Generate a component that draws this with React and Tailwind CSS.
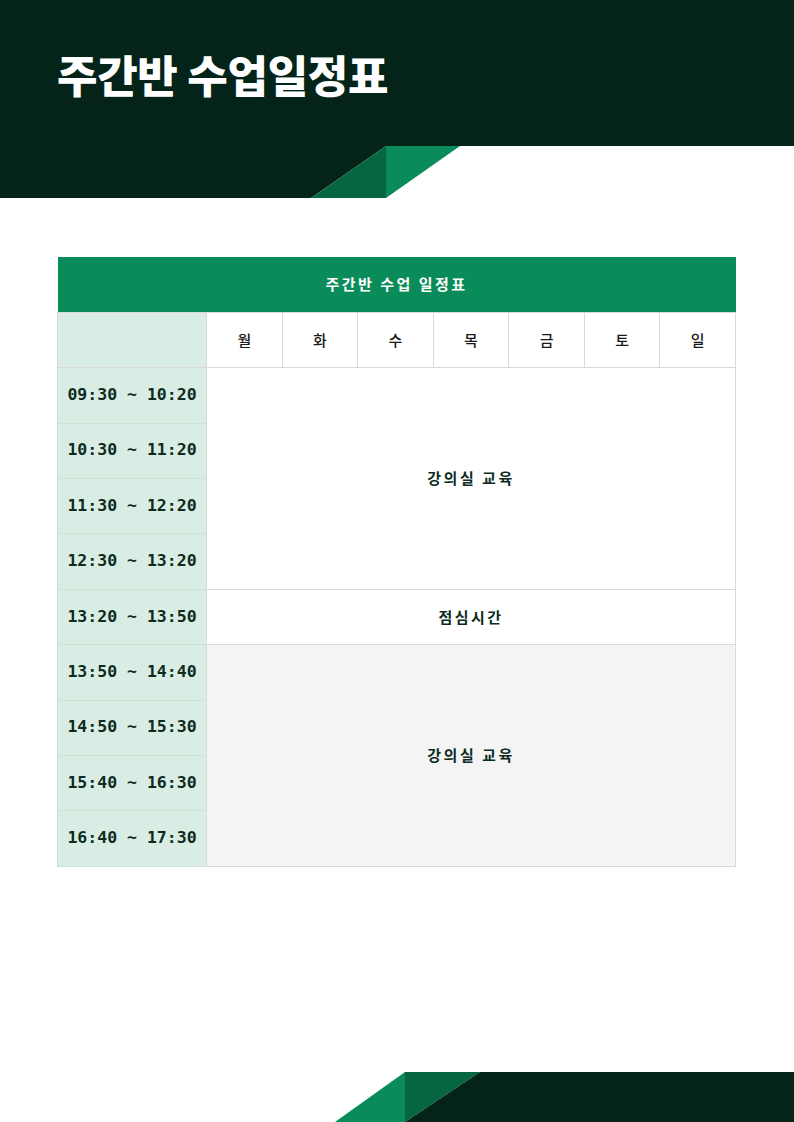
import React from 'react';

const days = ['월', '화', '수', '목', '금', '토', '일'];

const morning = ['09:30 ~ 10:20', '10:30 ~ 11:20', '11:30 ~ 12:20', '12:30 ~ 13:20'];
const afternoon = ['13:50 ~ 14:40', '14:50 ~ 15:30', '15:40 ~ 16:30', '16:40 ~ 17:30'];

const TimeCell = ({ children }) => (
  <td className="h-[55.4px] border-y border-[#cfe2d8] border-r border-r-[#d9d9d9] border-l border-l-[#d9d9d9] bg-[#d9ede4] text-center font-['DejaVu_Sans_Mono',monospace] text-[16.5px] font-bold text-[#0d2b1f]">
    {children}
  </td>
);

const App = () => {
  return (
    <div className="relative flex min-h-[1122px] w-[794px] flex-col bg-white font-['Noto_Sans_CJK_KR',sans-serif]">
      {/* header */}
      <header>
        <div className="h-[146px] bg-[#04241a] px-[57px] pt-[52px]">
          <h1 className="text-[44px] font-black leading-none tracking-[-0.3px] text-white">주간반 수업일정표</h1>
        </div>
        <svg width="794" height="52" viewBox="0 0 794 52" className="block">
          <polygon points="0,0 386,0 311,52 0,52" fill="#04241a" />
          <polygon points="311,52 386,0 386,52" fill="#066640" />
          <polygon points="386,0 460,0 386,52" fill="#0a8c5a" />
        </svg>
      </header>

      {/* schedule table */}
      <main className="pl-[57px] pr-[58px] pt-[59px]">
        <table className="w-full table-fixed border-collapse">
          <colgroup>
            <col className="w-[149px]" />
            {days.map((d) => <col key={d} />)}
          </colgroup>
          <thead>
            <tr>
              <th colSpan={8} className="h-[55.4px] bg-[#0a8c5a] text-center text-[15px] font-bold tracking-[2.5px] text-white">
                주간반 수업 일정표
              </th>
            </tr>
            <tr>
              <th className="h-[55.4px] border border-[#d9d9d9] bg-[#d9ede4]" />
              {days.map((d) => (
                <th key={d} className="border border-[#d9d9d9] text-center text-[15px] font-medium text-[#1a1a1a]">
                  {d}
                </th>
              ))}
            </tr>
          </thead>
          <tbody>
            {morning.map((t, i) => (
              <tr key={t}>
                <TimeCell>{t}</TimeCell>
                {i === 0 && (
                  <td colSpan={7} rowSpan={4} className="border border-[#d9d9d9] bg-white text-center text-[15px] font-bold tracking-[2.5px] text-[#0d2b1f]">
                    강의실 교육
                  </td>
                )}
              </tr>
            ))}
            <tr>
              <TimeCell>13:20 ~ 13:50</TimeCell>
              <td colSpan={7} className="border border-[#d9d9d9] bg-white text-center text-[15px] font-bold tracking-[2.5px] text-[#0d2b1f]">
                점심시간
              </td>
            </tr>
            {afternoon.map((t, i) => (
              <tr key={t}>
                <TimeCell>{t}</TimeCell>
                {i === 0 && (
                  <td colSpan={7} rowSpan={4} className="border border-[#d9d9d9] bg-[#f4f4f4] text-center text-[15px] font-bold tracking-[2.5px] text-[#0d2b1f]">
                    강의실 교육
                  </td>
                )}
              </tr>
            ))}
          </tbody>
        </table>
      </main>

      {/* footer band */}
      <footer className="mt-auto">
        <svg width="794" height="50" viewBox="0 0 794 50" className="block">
          <polygon points="335,50 405,0 405,50" fill="#0a8c5a" />
          <polygon points="405,0 480,0 405,50" fill="#066640" />
          <polygon points="480,0 794,0 794,50 405,50" fill="#04241a" />
        </svg>
      </footer>
    </div>
  );
};

export default App;
